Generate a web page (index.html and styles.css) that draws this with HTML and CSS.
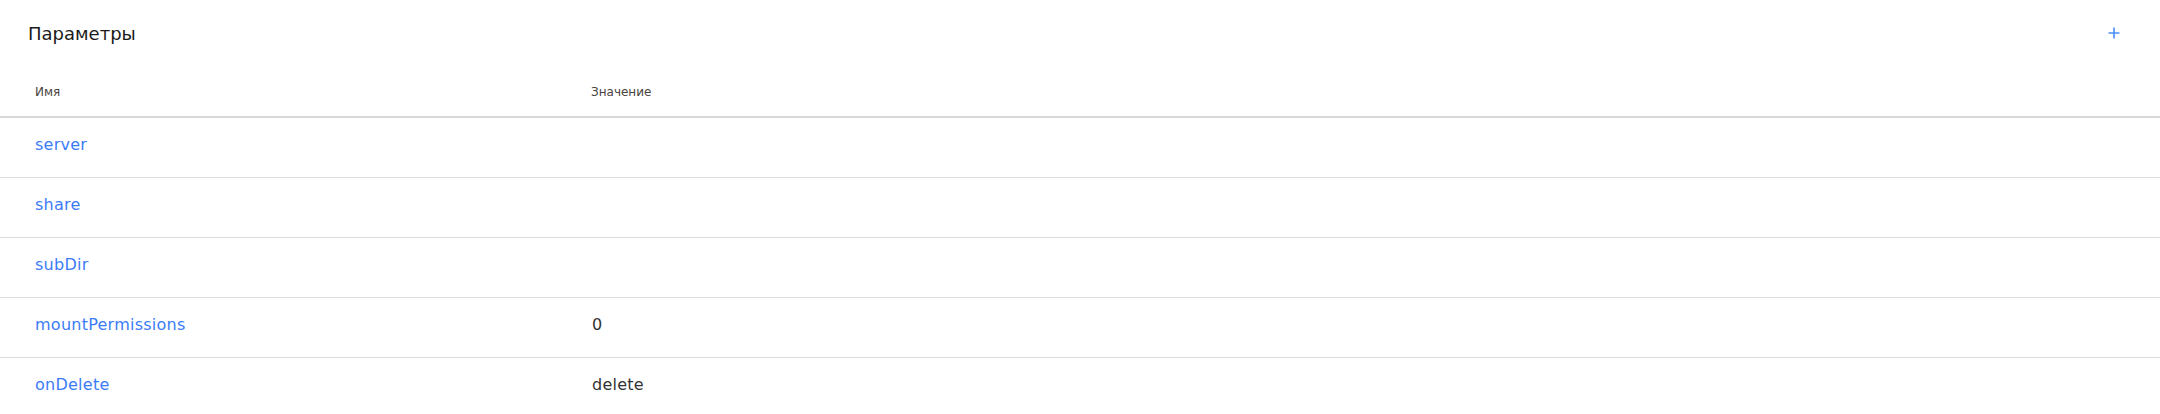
FILE: index.html
```html
<!DOCTYPE html>
<html lang="ru">
<head>
<meta charset="utf-8">
<title>Параметры</title>
<link rel="stylesheet" href="styles.css">
</head>
<body>
<section class="panel">
  <header class="panel-head">
    <h2 class="panel-title">Параметры</h2>
    <button class="add-btn" type="button" aria-label="Добавить">
      <svg width="12" height="12" viewBox="0 0 12 12"><path d="M6 0.5V11.5M0.5 6H11.5" stroke="currentColor" stroke-width="1.6" fill="none"/></svg>
    </button>
  </header>
  <table class="params">
    <thead>
      <tr><th class="col-name">Имя</th><th class="col-value">Значение</th></tr>
    </thead>
    <tbody>
      <tr><td><a class="param-link" href="#">server</a></td><td></td></tr>
      <tr><td><a class="param-link" href="#">share</a></td><td></td></tr>
      <tr><td><a class="param-link" href="#">subDir</a></td><td></td></tr>
      <tr><td><a class="param-link" href="#">mountPermissions</a></td><td>0</td></tr>
      <tr><td><a class="param-link" href="#">onDelete</a></td><td>delete</td></tr>
    </tbody>
  </table>
</section>
</body>
</html>
```

FILE: styles.css
```css
html, body {
  margin: 0;
  padding: 0;
  background: #ffffff;
}

body {
  font-family: "DejaVu Sans", "Noto Sans", sans-serif;
  color: #333333;
}

.panel {
  width: 100%;
}

.panel-head {
  height: 68px;
  display: flex;
  align-items: center;
  justify-content: space-between;
  padding: 0 34px 0 28px;
  box-sizing: border-box;
}

.panel-title {
  margin: 0;
  font-size: 18px;
  font-weight: 500;
  color: #1b1b1b;
  line-height: 24px;
}

.add-btn {
  width: 24px;
  height: 24px;
  border: 0;
  background: transparent;
  padding: 0;
  display: flex;
  align-items: center;
  justify-content: center;
  color: #4b8dfa;
  cursor: pointer;
  transform: translateY(-1px);
}

.params {
  width: 100%;
  border-collapse: collapse;
  table-layout: fixed;
}

.params th {
  height: 48px;
  padding: 0 0 0 35px;
  text-align: left;
  font-size: 12px;
  font-weight: 500;
  color: #4a4340;
  border-bottom: 2px solid #d9d9d9;
  vertical-align: middle;
}

.params .col-name {
  width: 556px;
  box-sizing: border-box;
}

.params td {
  height: 52px;
  padding: 0 0 7px 35px;
  font-size: 16px;
  letter-spacing: 0.25px;
  color: #333333;
  border-bottom: 1px solid #dcdcdc;
  vertical-align: middle;
}

.params td:nth-child(2) {
  padding-left: 36px;
}

.param-link {
  color: #3b7cf6;
  text-decoration: none;
}
```
